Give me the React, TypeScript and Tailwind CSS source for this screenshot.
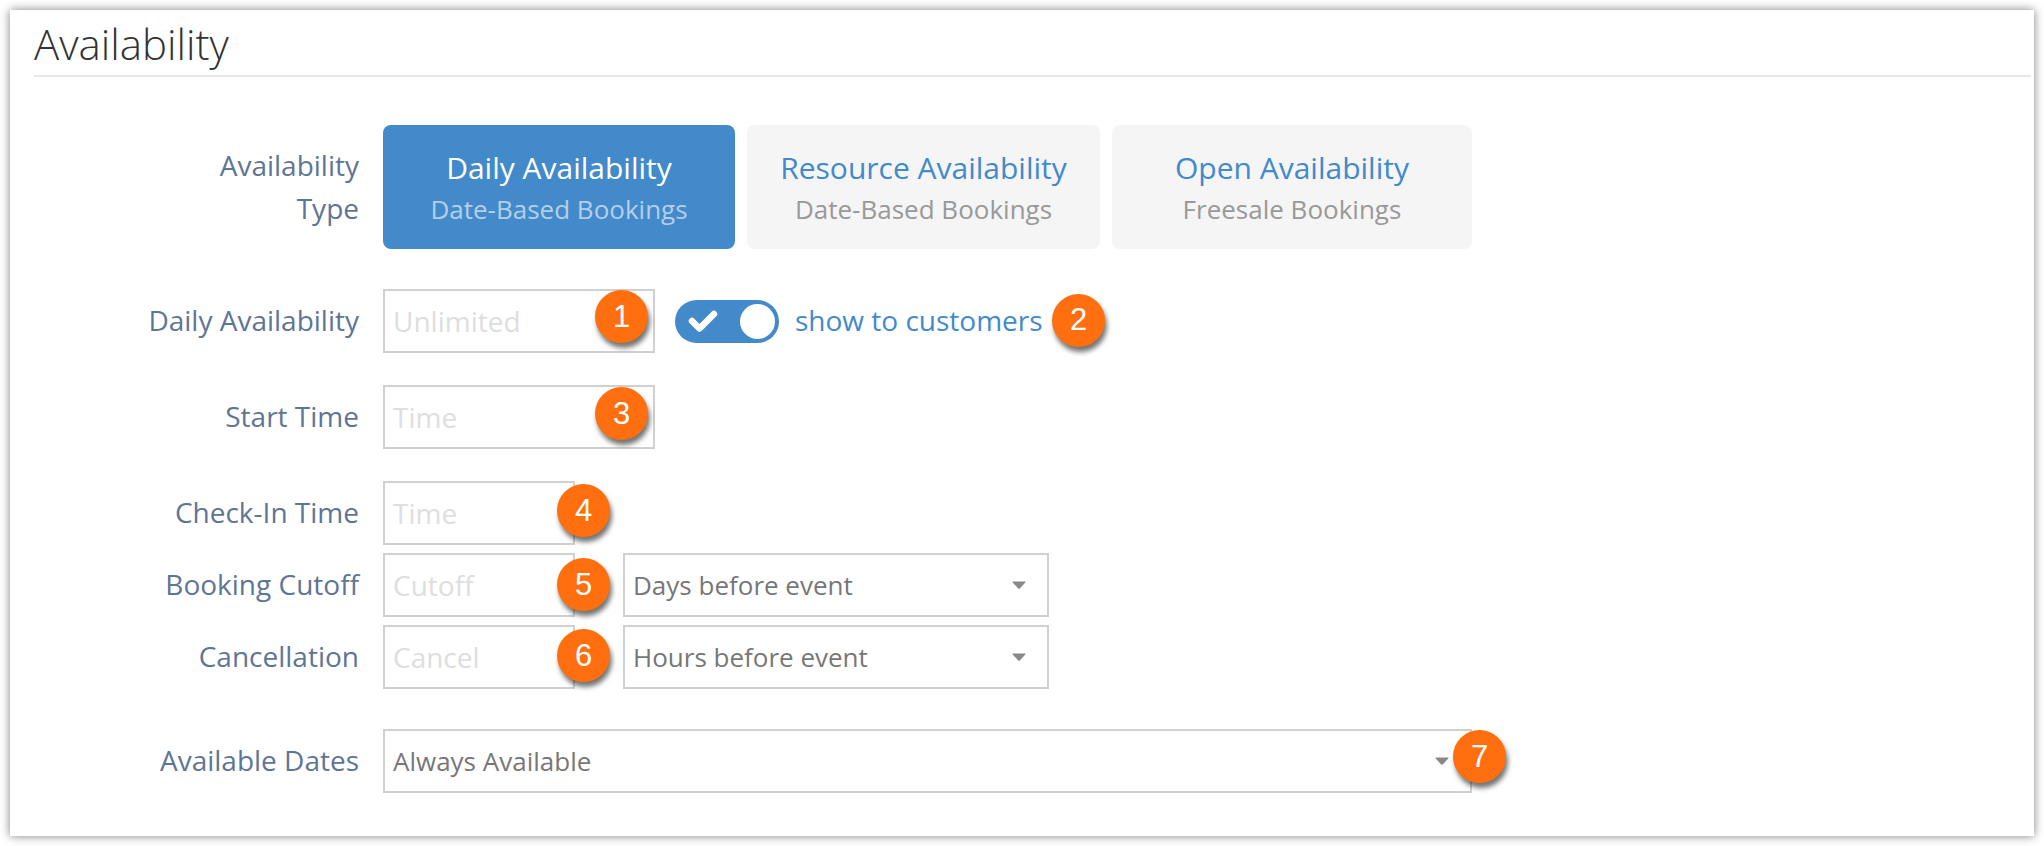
import React from "react";

function Badge({ n, className }: { n: number; className: string }) {
  return (
    <div
      className={`absolute flex h-[53px] w-[53px] items-center justify-center rounded-full bg-[#ff6f0f] pb-[1px] text-[31px] leading-none text-white shadow-[2px_5px_5px_rgba(0,0,0,0.55)] [font-family:'Liberation_Sans',sans-serif] ${className}`}
    >
      {n}
    </div>
  );
}

function Caret() {
  return (
    <svg width="14" height="8" viewBox="0 0 14 8" className="shrink-0">
      <path d="M1 0.5H13Q14 0.5 13.3 1.5L7.8 7.4Q7 8 6.2 7.4L0.7 1.5Q0 0.5 1 0.5Z" fill="#888888" />
    </svg>
  );
}

function Label({ children }: { children: React.ReactNode }) {
  return <div className="w-[325px] shrink-0 pb-[2px] text-right text-[28px] leading-[41px] text-[#5f7595]">{children}</div>;
}

function Field({ text, className }: { text: string; className: string }) {
  return (
    <div className={`flex h-[64px] items-center border-2 border-[#d0d0d0] pl-[8px] text-[28px] text-[#dedede] ${className}`}>
      {text}
    </div>
  );
}

function Select({ text, className, caret }: { text: string; className: string; caret: string }) {
  return (
    <div className={`flex h-[64px] items-center justify-between border-2 border-[#d0d0d0] pl-[8px] text-[26px] text-[#777777] ${className}`}>
      <span>{text}</span>
      <span className={`flex ${caret}`}><Caret /></span>
    </div>
  );
}

function TypeButton({ title, sub, active, className }: { title: string; sub: string; active?: boolean; className: string }) {
  return (
    <div
      className={`flex h-[124px] flex-col items-center justify-center rounded-[8px] ${active ? "bg-[#428aca]" : "bg-[#f5f5f5]"} ${className}`}
    >
      <div className={`pt-[1px] text-[30px] leading-[42px] ${active ? "text-white" : "text-[#428aca]"}`}>{title}</div>
      <div className={`text-[26px] leading-[40px] ${active ? "text-[#b4cfe9]" : "text-[#999999]"}`}>{sub}</div>
    </div>
  );
}

export default function App() {
  return (
    <div className="h-[846px] w-[2044px] overflow-hidden bg-white p-[10px] [font-family:'Open_Sans',sans-serif]">
      <div className="h-[826px] w-[2024px] bg-white pl-[24px] pr-[3px] shadow-[0_0_9px_rgba(0,0,0,0.5)]">
        <div className="h-[67px] border-b-2 border-[#e8e8e8] pt-[9px] text-[42px] font-light leading-[50px] text-[#333333]">
          Availability
        </div>

        <div className="mt-[48px] flex items-center gap-[24px]">
          <div className="w-[325px] shrink-0 text-right text-[28px] leading-[43px] text-[#5f7595]">
            Availability
            <br />
            Type
          </div>
          <div className="flex gap-[12px]">
            <TypeButton active title="Daily Availability" sub="Date-Based Bookings" className="w-[352px]" />
            <TypeButton title="Resource Availability" sub="Date-Based Bookings" className="w-[353px]" />
            <TypeButton title="Open Availability" sub="Freesale Bookings" className="w-[360px]" />
          </div>
        </div>

        <div className="mt-[40px] flex items-center gap-[24px]">
          <Label>Daily Availability</Label>
          <div className="relative">
            <Field text="Unlimited" className="w-[272px]" />
            <Badge n={1} className="left-[212px] top-[1px]" />
          </div>
          <div className="ml-[-4px] flex h-[43px] w-[104px] items-center justify-between rounded-full bg-[#428aca] pl-[13px] pr-[4px]">
            <svg width="30" height="24" viewBox="0 0 30 24">
              <path d="M4 12L11.5 19.5L26 5" fill="none" stroke="white" strokeWidth="6.5" strokeLinejoin="round" strokeLinecap="round" />
            </svg>
            <div className="h-[35px] w-[35px] rounded-full bg-white" />
          </div>
          <div className="relative ml-[-8px] pb-[2px] text-[28px] leading-[41px] text-[#428aca]">
            show to customers
            <Badge n={2} className="left-[257px] top-[-6px]" />
          </div>
        </div>

        <div className="mt-[32px] flex items-center gap-[24px]">
          <Label>Start Time</Label>
          <div className="relative">
            <Field text="Time" className="w-[272px]" />
            <Badge n={3} className="left-[212px] top-[2px]" />
          </div>
        </div>

        <div className="mt-[32px] flex items-center gap-[24px]">
          <Label>Check-In Time</Label>
          <div className="relative">
            <Field text="Time" className="w-[192px]" />
            <Badge n={4} className="left-[174px] top-[3px]" />
          </div>
        </div>

        <div className="mt-[8px] flex items-center gap-[24px]">
          <Label>Booking Cutoff</Label>
          <div className="relative">
            <Field text="Cutoff" className="w-[192px]" />
            <Badge n={5} className="left-[174px] top-[5px]" />
          </div>
          <Select text="Days before event" className="ml-[24px] w-[426px]" caret="mr-[21px]" />
        </div>

        <div className="mt-[8px] flex items-center gap-[24px]">
          <Label>Cancellation</Label>
          <div className="relative">
            <Field text="Cancel" className="w-[192px]" />
            <Badge n={6} className="left-[174px] top-[4px]" />
          </div>
          <Select text="Hours before event" className="ml-[24px] w-[426px]" caret="mr-[21px]" />
        </div>

        <div className="mt-[40px] flex items-center gap-[24px]">
          <Label>Available Dates</Label>
          <div className="relative">
            <Select text="Always Available" className="w-[1089px]" caret="mr-[21px]" />
            <Badge n={7} className="left-[1070px] top-[1px]" />
          </div>
        </div>
      </div>
    </div>
  );
}
